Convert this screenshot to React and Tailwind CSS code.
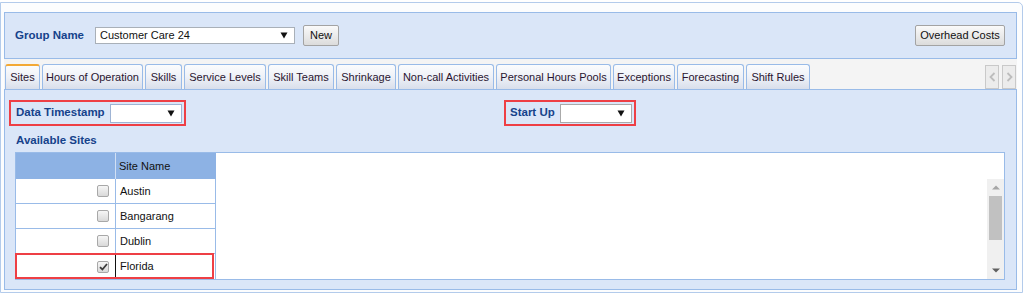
import React from "react";

const tabs = [
  ["Sites", 35],
  ["Hours of Operation", 101],
  ["Skills", 37],
  ["Service Levels", 82],
  ["Skill Teams", 66],
  ["Shrinkage", 60],
  ["Non-call Activities", 96],
  ["Personal Hours Pools", 115],
  ["Exceptions", 62],
  ["Forecasting", 67],
  ["Shift Rules", 64],
];

const sites = ["Austin", "Bangarang", "Dublin", "Florida"];

function Arrow() {
  return (
    <svg width="8" height="7" viewBox="0 0 8 7" className="shrink-0">
      <path d="M0.5 0.5 H7.5 L4 6.5 Z" fill="#111" />
    </svg>
  );
}

function Select({ w, h, text, border }) {
  return (
    <div
      className={`flex items-center justify-between bg-white border ${border} pl-[4px] pr-[6px] ${w} ${h}`}
    >
      <span className="text-[11px] text-[#111] leading-none">{text}</span>
      <Arrow />
    </div>
  );
}

function Button({ children, w }) {
  return (
    <div
      className={`${w} h-[21px] flex items-center justify-center rounded-[2px] border border-[#a3a3a3] bg-linear-to-b from-[#fafafa] to-[#dcdcdc] text-[11px] text-[#111]`}
    >
      {children}
    </div>
  );
}

function Checkbox({ checked }) {
  return (
    <div className="w-[12px] h-[12px] rounded-[2px] border border-[#a8a8a8] bg-linear-to-b from-[#f6f6f6] to-[#d9d9d9] flex items-center justify-center">
      {checked && (
        <svg width="9" height="8" viewBox="0 0 9 8">
          <path d="M1 4.2 L3.4 6.5 L8 1" stroke="#3c3c3c" strokeWidth="1.8" fill="none" />
        </svg>
      )}
    </div>
  );
}

export default function App() {
  return (
    <div className="w-[1027px] h-[293px] bg-white overflow-hidden font-['Liberation_Sans',Arial,sans-serif]">
      <div className="mt-[2px] w-[1023px] h-[291px] border border-[#b3cbeb] rounded-tr-[5px] bg-[#fcfdfe] pt-[9px] pl-[3px]">
        <div className="w-[1013px]">
          {/* Header */}
          <div className="h-[47px] border border-[#99bbe8] bg-[#dae6f8] flex items-center pl-[10px] pr-[11px]">
            <span className="w-[80px] text-[11.5px] font-bold text-[#15428b]">Group Name</span>
            <Select w="w-[200px]" h="h-[17px]" text="Customer Care 24" border="border-[#a9b0b8]" />
            <div className="ml-[8px]">
              <Button w="w-[36px]">New</Button>
            </div>
            <div className="flex-1" />
            <Button w="w-[90px]">Overhead Costs</Button>
          </div>

          {/* Tab strip */}
          <div className="h-[30px] bg-[#f4f4f4] flex items-end pl-[1px]">
            <div className="flex gap-[2px] items-end">
              {tabs.map(([t, w], i) => (
                <div
                  key={t}
                  style={{ width: w }}
                  className={`h-[25px] flex items-center justify-center rounded-t-[3px] border border-b-0 border-[#99bbe8] bg-linear-to-b from-[#fbfcfd] via-[#eef1f7] to-[#d9dfeb] text-[11px] text-[#2a1530] whitespace-nowrap ${
                    i === 0 ? "border-t-2 border-t-[#f3a935]" : ""
                  }`}
                >
                  {t}
                </div>
              ))}
            </div>
            <div className="flex-1" />
            <div className="flex gap-[3px] mr-[1px] mb-0 h-[24px]">
              <div className="w-[14px] h-[24px] border border-[#c9c9c9] bg-[#ececec] flex items-center justify-center">
                <svg width="7" height="10" viewBox="0 0 7 10">
                  <path d="M5.5 1 L1.5 5 L5.5 9" stroke="#bdbdbd" strokeWidth="1.8" fill="none" />
                </svg>
              </div>
              <div className="w-[14px] h-[24px] border border-[#c9c9c9] bg-[#ececec] flex items-center justify-center">
                <svg width="7" height="10" viewBox="0 0 7 10">
                  <path d="M1.5 1 L5.5 5 L1.5 9" stroke="#bdbdbd" strokeWidth="1.8" fill="none" />
                </svg>
              </div>
            </div>
          </div>

          {/* Content panel */}
          <div className="h-[201px] border border-[#99bbe8] bg-[#dae6f8] flex flex-col">
            <div className="mt-[10px] ml-[4px] flex">
              <div className="w-[177px] h-[26px] border-2 border-[#ee3f45] flex items-center pl-[5px]">
                <span className="w-[94px] text-[11.5px] font-bold text-[#15428b] whitespace-nowrap">Data Timestamp</span>
                <Select w="w-[72px]" h="h-[19px]" text="" border="border-[#9fb4d4]" />
              </div>
              <div className="ml-[318px] w-[132px] h-[26px] border-2 border-[#ee3f45] flex items-center pl-[4px]">
                <span className="w-[50px] text-[11.5px] font-bold text-[#15428b] whitespace-nowrap">Start Up</span>
                <Select w="w-[72px]" h="h-[19px]" text="" border="border-[#aaaaaa]" />
              </div>
            </div>
            <div className="mt-[7px] ml-[11px] h-[14px] leading-[14px] text-[11.5px] font-bold text-[#15428b]">
              Available Sites
            </div>
            <div className="mt-[5px] ml-[10px] w-[990px] h-[128px] border border-[#99bbe8] bg-white flex">
              <div className="w-[200px] flex flex-col">
                <div className="h-[26px] flex">
                  <div className="w-[99px] bg-[#8db2e4]" />
                  <div className="w-[101px] border-l border-[#d2e0f4] bg-[#8db2e4] flex items-center pl-[3px] text-[11px] text-[#111]">
                    Site Name
                  </div>
                </div>
                {sites.map((s, i) => {
                  const last = i === sites.length - 1;
                  return (
                    <div
                      key={s}
                      className={`relative flex ${last ? "h-[25px]" : "h-[25px] border-b border-[#99bbe8]"}`}
                    >
                      <div className="w-[99px] flex items-center justify-end pr-[6px]">
                        <Checkbox checked={last} />
                      </div>
                      <div
                        className={`w-[101px] border-l border-r ${
                          last ? "border-l-[#111] border-r-[#99bbe8]" : "border-[#99bbe8]"
                        } flex items-center pl-[4px] text-[11px] text-[#111]`}
                      >
                        {s}
                      </div>
                      {last && (
                        <div className="absolute top-[-1px] left-[-1px] w-[199px] h-[26px] border-2 border-[#ee3f45]" />
                      )}
                    </div>
                  );
                })}
              </div>
              <div className="flex-1" />
              <div className="w-[17px] flex flex-col pt-[26px]">
                <div className="flex-1 bg-[#f0f0f0] flex flex-col items-center">
                  <div className="h-[17px] flex items-center justify-center">
                    <svg width="8" height="5" viewBox="0 0 8 5">
                      <path d="M0 4.5 L4 0.5 L8 4.5 Z" fill="#a6a6a6" />
                    </svg>
                  </div>
                  <div className="w-[13px] h-[44px] bg-[#c1c1c1]" />
                  <div className="flex-1" />
                  <div className="h-[17px] flex items-center justify-center">
                    <svg width="8" height="5" viewBox="0 0 8 5">
                      <path d="M0 0.5 L8 0.5 L4 4.5 Z" fill="#606060" />
                    </svg>
                  </div>
                </div>
              </div>
            </div>
          </div>
        </div>
      </div>
    </div>
  );
}
